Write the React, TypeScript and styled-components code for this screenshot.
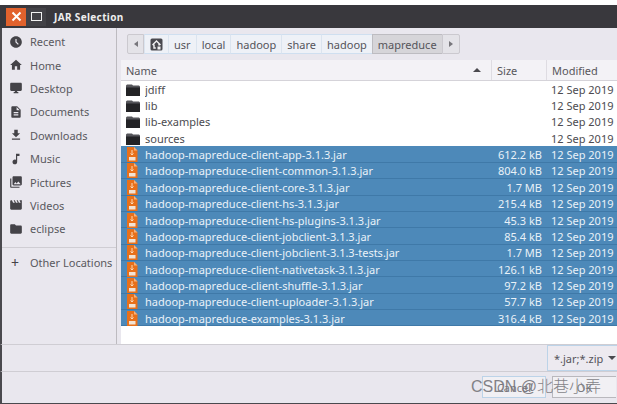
import styled, { createGlobalStyle } from "styled-components";
import {
  MdAccessTimeFilled,
  MdHome,
  MdDesktopWindows,
  MdDescription,
  MdDownload,
  MdMusicNote,
  MdPhotoLibrary,
  MdMovie,
  MdFolder,
} from "react-icons/md";

const GlobalStyle = createGlobalStyle`
  html, body {
    margin: 0;
    padding: 0;
    background: #fff;
    overflow: hidden;
  }
  body {
    font-family: "Noto Sans", "Open Sans", sans-serif;
  }
`;

const places = [
  { label: "Recent", icon: <MdAccessTimeFilled /> },
  { label: "Home", icon: <MdHome /> },
  { label: "Desktop", icon: <MdDesktopWindows /> },
  { label: "Documents", icon: <MdDescription /> },
  { label: "Downloads", icon: <MdDownload /> },
  { label: "Music", icon: <MdMusicNote /> },
  { label: "Pictures", icon: <MdPhotoLibrary /> },
  { label: "Videos", icon: <MdMovie /> },
  { label: "eclipse", icon: <MdFolder /> },
];

const crumbs = ["usr", "local", "hadoop", "share", "hadoop", "mapreduce"];
const folders = ["jdiff", "lib", "lib-examples", "sources"];

const jars = [
  ["hadoop-mapreduce-client-app-3.1.3.jar", "612.2 kB"],
  ["hadoop-mapreduce-client-common-3.1.3.jar", "804.0 kB"],
  ["hadoop-mapreduce-client-core-3.1.3.jar", "1.7 MB"],
  ["hadoop-mapreduce-client-hs-3.1.3.jar", "215.4 kB"],
  ["hadoop-mapreduce-client-hs-plugins-3.1.3.jar", "45.3 kB"],
  ["hadoop-mapreduce-client-jobclient-3.1.3.jar", "85.4 kB"],
  ["hadoop-mapreduce-client-jobclient-3.1.3-tests.jar", "1.7 MB"],
  ["hadoop-mapreduce-client-nativetask-3.1.3.jar", "126.1 kB"],
  ["hadoop-mapreduce-client-shuffle-3.1.3.jar", "97.2 kB"],
  ["hadoop-mapreduce-client-uploader-3.1.3.jar", "57.7 kB"],
  ["hadoop-mapreduce-examples-3.1.3.jar", "316.4 kB"],
];

const JarIcon = () => (
  <svg width="12" height="15" viewBox="0 0 12 15">
    <path d="M1 0h7l3.5 3.5V15H1z" fill="#e8701a" />
    <path d="M8 0l3.5 3.5H8z" fill="#f6b27c" />
    <rect x="3" y="10" width="6.5" height="3.5" fill="#f3e3d3" />
    <path d="M6 3v5M4.5 6.5L6 8l1.5-1.5" stroke="#fbd9b8" strokeWidth="1" fill="none" />
  </svg>
);

const FolderIcon = () => (
  <svg width="14" height="13" viewBox="0 0 14 13">
    <path d="M0 2.5L1 1.5h5l1 1h6l1 1V5H0z" fill="#55555a" />
    <path d="M0 4.5h14V13H0z" fill="#232326" />
  </svg>
);

const HomeCrumbIcon = () => (
  <svg width="13" height="13" viewBox="0 0 13 13">
    <rect x="0.5" y="0.5" width="12" height="12" rx="1.5" fill="#4a4a50" />
    <path d="M2.5 7L6.5 3l4 4M4 6.5V10h1.8M9 6v1.5" stroke="#f2f2f4" strokeWidth="1.4" fill="none" />
    <rect x="7.5" y="8.5" width="3" height="3" fill="#f2f2f4" />
  </svg>
);

const App = () => {
  return (
    <>
      <GlobalStyle />
      <Page>
        <TitleBar>
          <CloseButton>
            <svg width="11" height="11" viewBox="0 0 11 11">
              <path d="M1.5 1.5l8 8M9.5 1.5l-8 8" stroke="#fff" strokeWidth="2" />
            </svg>
          </CloseButton>
          <MaxButton>
            <MaxBox />
          </MaxButton>
          <Title>JAR Selection</Title>
        </TitleBar>

        <Body>
          <Sidebar>
            {places.map((place) => (
              <Place key={place.label}>
                <PlaceIcon>{place.icon}</PlaceIcon>
                {place.label}
              </Place>
            ))}
            <SideDivider />
            <OtherPlace>
              <PlusIcon>+</PlusIcon>
              Other Locations
            </OtherPlace>
          </Sidebar>

          <Main>
            <PathBar>
              <PathArrow $side="left">
                <LeftArrow />
              </PathArrow>
              <Crumb $home>
                <HomeCrumbIcon />
              </Crumb>
              {crumbs.map((crumb, i) => (
                <Crumb key={i} $active={i === crumbs.length - 1}>
                  {crumb}
                </Crumb>
              ))}
              <PathArrow $side="right">
                <RightArrow />
              </PathArrow>
            </PathBar>

            <FileList>
              <HeaderRow>
                <NameHeader>
                  Name
                  <SortArrow />
                </NameHeader>
                <SizeHeader>Size</SizeHeader>
                <ModifiedHeader>Modified</ModifiedHeader>
              </HeaderRow>
              {folders.map((folder) => (
                <Row key={folder}>
                  <RowIcon>
                    <FolderIcon />
                  </RowIcon>
                  <RowName>{folder}</RowName>
                  <RowSize />
                  <RowDate>12 Sep 2019</RowDate>
                </Row>
              ))}
              {jars.map(([name, size]) => (
                <Row key={name} $selected>
                  <RowIcon>
                    <JarIcon />
                  </RowIcon>
                  <RowName>{name}</RowName>
                  <RowSize>{size}</RowSize>
                  <RowDate>12 Sep 2019</RowDate>
                </Row>
              ))}
            </FileList>
          </Main>
        </Body>

        <FilterBar>
          <FilterButton>
            *.jar;*.zip
            <DownArrow />
          </FilterButton>
        </FilterBar>

        <ActionBar>
          <CancelButton>Cancel</CancelButton>
          <OkButton>OK</OkButton>
          <Watermark>CSDN @北巷小弄</Watermark>
        </ActionBar>
      </Page>
    </>
  );
};

export default App;

const Page = styled.div`
  width: 617px;
  height: 404px;
  padding-top: 5px;
  box-sizing: border-box;
  display: flex;
  flex-direction: column;
  overflow: hidden;
`;

const TitleBar = styled.div`
  height: 23px;
  flex: none;
  background: #39383d;
  display: flex;
  align-items: center;
`;

const CloseButton = styled.div`
  width: 20px;
  height: 18px;
  margin-left: 6px;
  background: #e2622d;
  display: flex;
  align-items: center;
  justify-content: center;
`;

const MaxButton = styled.div`
  width: 20px;
  height: 18px;
  background: #434247;
  display: flex;
  align-items: center;
  justify-content: center;
`;

const MaxBox = styled.div`
  width: 9px;
  height: 7px;
  border: 1.5px solid #f2f2f2;
`;

const Title = styled.div`
  margin-left: 8px;
  color: #eeeeee;
  font-size: 10px;
  font-weight: 700;
  letter-spacing: 0.35px;
`;

const Body = styled.div`
  flex: 1;
  min-height: 0;
  display: flex;
  background: #e9e7ee;
  border-left: 2px solid #4a494e;
`;

const Sidebar = styled.div`
  width: 114px;
  flex: none;
  border-right: 1px solid #bdbbc0;
  padding-top: 2px;
  box-sizing: content-box;
  overflow: hidden;
`;

const Place = styled.div`
  height: 23.4px;
  display: flex;
  align-items: center;
  color: #5a595e;
  font-size: 11px;
  white-space: nowrap;
`;

const PlaceIcon = styled.span`
  width: 28px;
  padding-left: 7px;
  box-sizing: border-box;
  font-size: 14px;
  color: #444348;
  display: flex;
  align-items: center;
`;

const SideDivider = styled.div`
  height: 1px;
  background: #cfcdd3;
  margin-top: 6px;
`;

const OtherPlace = styled(Place)`
  margin-top: 3px;
`;

const PlusIcon = styled.span`
  width: 28px;
  padding-left: 9px;
  box-sizing: border-box;
  font-size: 14px;
  color: #444348;
`;

const Main = styled.div`
  flex: 1;
  min-width: 0;
  padding-top: 6px;
  display: flex;
  flex-direction: column;
`;

const PathBar = styled.div`
  margin-left: 10px;
  height: 20px;
  display: flex;
  align-items: stretch;
  align-self: flex-start;
`;

const PathArrow = styled.div<{ $side: "left" | "right" }>`
  width: ${(p) => (p.$side === "left" ? "17px" : "18px")};
  box-sizing: border-box;
  background: #e4e3e8;
  border: 1px solid #cbc9cf;
  border-radius: ${(p) => (p.$side === "left" ? "2px 0 0 2px" : "0 2px 2px 0")};
  display: flex;
  align-items: center;
  justify-content: center;
`;

const LeftArrow = styled.div`
  border-top: 3px solid transparent;
  border-bottom: 3px solid transparent;
  border-right: 4px solid #77767b;
`;

const RightArrow = styled.div`
  border-top: 3px solid transparent;
  border-bottom: 3px solid transparent;
  border-left: 4px solid #77767b;
`;

const Crumb = styled.div<{ $active?: boolean; $home?: boolean }>`
  padding: 0 ${(p) => (p.$home ? "5px" : "5px")};
  display: flex;
  align-items: center;
  font-size: 11px;
  color: #55545a;
  background: ${(p) => (p.$active ? "#d6d5d9" : "#eef1f7")};
  border: 1px solid ${(p) => (p.$active ? "#bdbcc1" : "#cfdff0")};
  border-left: 1px solid ${(p) => (p.$active ? "#bdbcc1" : "#dbe4ef")};
  border-right: 0;
`;

const FileList = styled.div`
  flex: 1;
  min-height: 0;
  margin: 6px 0 0 4px;
  background: #fff;
  overflow: hidden;
`;

const HeaderRow = styled.div`
  height: 21px;
  display: flex;
  background: #f3f2f6;
  border-bottom: 1px solid #d5d3d9;
  box-sizing: border-box;
  color: #57565b;
  font-size: 11px;
`;

const HeaderCell = styled.div`
  display: flex;
  align-items: center;
  box-sizing: border-box;
  padding-left: 5px;
  border-right: 1px solid #dedce2;
`;

const NameHeader = styled(HeaderCell)`
  width: 371px;
  justify-content: space-between;
  padding-right: 10px;
`;

const SizeHeader = styled(HeaderCell)`
  width: 55px;
`;

const ModifiedHeader = styled(HeaderCell)`
  flex: 1;
  border-right: 0;
`;

const SortArrow = styled.div`
  border-left: 4px solid transparent;
  border-right: 4px solid transparent;
  border-bottom: 4px solid #4a494e;
`;

const Row = styled.div<{ $selected?: boolean }>`
  height: 16.36px;
  display: flex;
  align-items: center;
  white-space: nowrap;
  font-size: 11px;
  color: ${(p) => (p.$selected ? "#e9f1f8" : "#4c4b50")};
  background: ${(p) => (p.$selected ? "#4d89b9" : "#fff")};
  box-shadow: ${(p) => (p.$selected ? "inset 0 -1px 0 #3f79a8" : "none")};
`;

const RowIcon = styled.span`
  width: 24px;
  padding-left: 5px;
  box-sizing: border-box;
  display: flex;
  align-items: center;
`;

const RowName = styled.span`
  width: 350px;
  overflow: hidden;
`;

const RowSize = styled.span`
  width: 53px;
  text-align: right;
  padding-right: 6px;
  box-sizing: border-box;
`;

const RowDate = styled.span`
  padding-left: 3px;
`;

const FilterBar = styled.div`
  height: 27px;
  flex: none;
  box-sizing: border-box;
  background: #e9e7ee;
  border-top: 1px solid #cfcdd3;
  border-left: 2px solid #4a494e;
  display: flex;
  justify-content: flex-end;
`;

const FilterButton = styled.div`
  width: 70px;
  height: 26px;
  box-sizing: border-box;
  border: 1px solid #bcd3e8;
  border-right: 0;
  background: #edeaf0;
  color: #55545a;
  font-size: 11px;
  display: flex;
  align-items: center;
  gap: 5px;
  padding-left: 6px;
`;

const DownArrow = styled.div`
  border-left: 4px solid transparent;
  border-right: 4px solid transparent;
  border-top: 4px solid #4a494e;
`;

const ActionBar = styled.div`
  height: 33px;
  flex: none;
  box-sizing: border-box;
  position: relative;
  background: #e9e7ee;
  border-top: 1px solid #cfcdd3;
  border-left: 2px solid #4a494e;
  border-bottom: 1px solid #4a494e;
  display: flex;
  justify-content: flex-end;
  align-items: flex-start;
  padding-top: 4px;
`;

const ActionButton = styled.div`
  height: 22px;
  box-sizing: border-box;
  display: flex;
  align-items: center;
  justify-content: center;
  font-size: 11px;
  color: #77767b;
  background: #f1f0f4;
`;

const CancelButton = styled(ActionButton)`
  width: 64px;
  border: 1px solid #bcd3e8;
  margin-right: 6px;
`;

const OkButton = styled(ActionButton)`
  width: 64px;
  margin-right: 1px;
  border: 1px solid #b9b8bd;
  border-right: 0;
`;

const Watermark = styled.div`
  position: absolute;
  right: 16px;
  top: 1px;
  color: #77767b;
  opacity: 0.9;
  font-size: 16px;
  font-weight: 300;
  white-space: nowrap;
  font-family: "Liberation Sans", "Noto Sans CJK SC", sans-serif;
`;
